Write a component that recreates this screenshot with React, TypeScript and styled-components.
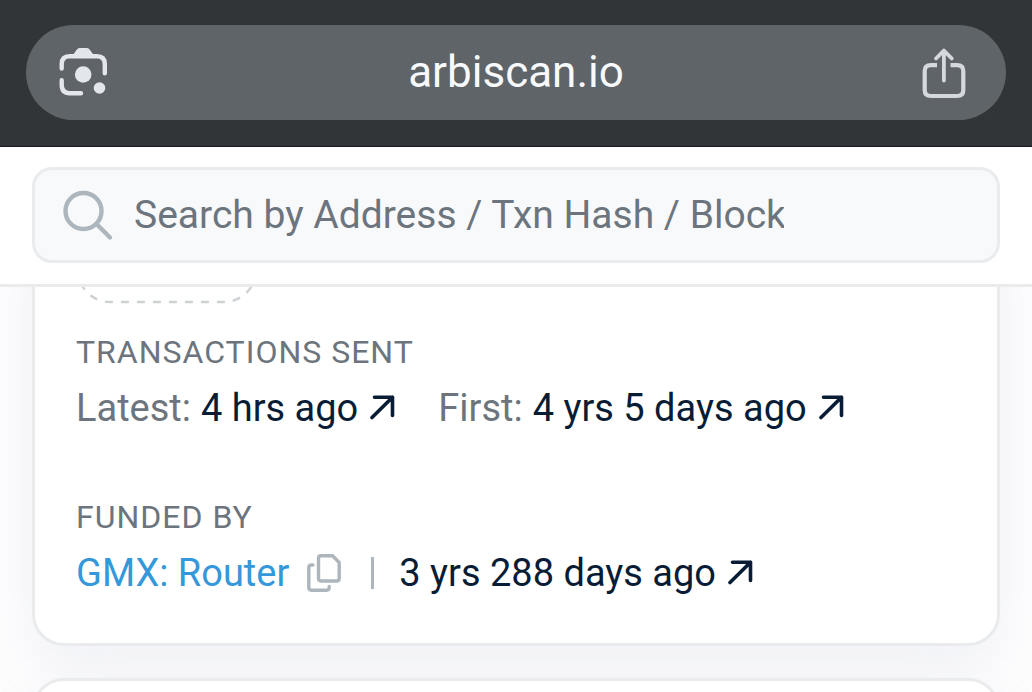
import React from "react";
import styled, { createGlobalStyle } from "styled-components";

const GlobalStyle = createGlobalStyle`
  *, *::before, *::after { box-sizing: border-box; }
  html, body { margin: 0; background: #fdfdfe; }
  body { font-family: Roboto, "Liberation Sans", sans-serif; overflow: hidden; }
  svg { display: block; flex: none; }
`;

const Page = styled.div`
  display: flex;
  flex-direction: column;
  height: 100vh;
`;

const BrowserBar = styled.div`
  background: #313538;
  border-bottom: 1px solid #1b1b1d;
  padding: 25px 26px 26px;
`;

const AddressPill = styled.div`
  display: grid;
  grid-template-columns: 1fr auto 1fr;
  align-items: center;
  height: 95px;
  padding: 0 40px 0 32px;
  border-radius: 48px;
  background: #5f6468;
  color: #f8f9fc;
`;

const IconButton = styled.button`
  display: flex;
  justify-self: ${(p) => (p.name === "share" ? "end" : "start")};
  padding: 0;
  border: 0;
  background: none;
  color: ${(p) => p.color ?? "#e3e6ea"};
`;

const Domain = styled.span`
  padding-left: 8px;
  font-size: 44px;
  line-height: 48px;
  padding-bottom: 2px;
`;

const SiteHeader = styled.header`
  background: #fff;
  border-bottom: 3px solid #e9ebed;
  padding: 20px 32px 21px;
`;

const SearchField = styled.label`
  display: flex;
  align-items: center;
  gap: 20px;
  height: 96px;
  padding: 0 213px 0 28px;
  border: 3px solid #e9ebed;
  border-radius: 20px;
  background: #f8f9fb;
  color: #adb5bd;
`;

const SearchInput = styled.input`
  flex: 1;
  min-width: 0;
  padding: 0;
  border: 0;
  outline: 0;
  background: none;
  font-family: inherit;
  font-size: 39px;
  line-height: 48px;
  height: 56px;
  color: #081d35;
  &::placeholder { color: #6c757d; opacity: 1; }
`;

const Content = styled.main`
  flex: 1;
  min-height: 0;
  overflow: hidden;
  padding: 0 32px;
`;

const Card = styled.section`
  border: 3px solid #e9ebed;
  border-radius: 32px;
  background: #fff;
  padding: 20px 41px 46px;
  margin-bottom: 32px;
  box-shadow: 0 20px 56px rgba(189, 197, 209, 0.2);
  &:first-child { margin-top: -82px; }
`;

const Group = styled.div`
  & + & { margin-top: 66px; }
`;

const Groups = styled.div`
  padding-top: 29px;
`;

const Heading = styled.h2`
  margin: 0 0 13px;
  font-size: 32px;
  font-weight: 400;
  line-height: 38px;
  letter-spacing: 1px;
  color: #6c757d;
`;

const Row = styled.div`
  display: flex;
  align-items: center;
  font-size: 38px;
  line-height: 48px;
  white-space: nowrap;
`;

const Pair = styled.span`
  display: flex;
  align-items: center;
  gap: 10px;
  margin-right: 42px;
  color: #6c757d;
`;

const TimeLink = styled.a`
  display: flex;
  align-items: center;
  gap: 12px;
  color: #081d35;
  text-decoration: none;
`;

const NameLink = styled.a`
  margin-right: 18px;
  color: #3498db;
  text-decoration: none;
`;

const Divider = styled.span`
  width: 3px;
  height: 32px;
  margin: 0 25px 0 30px;
  background: #adb5bd;
`;

const LensIcon = () => (
  <svg width="50" height="50" viewBox="0 0 50 50" fill="none" stroke="currentColor" strokeWidth="4.4" strokeLinecap="round">
    <path d="M3.7 20.5V16Q3.7 8.2 11.5 8.2H39Q46.8 8.2 46.8 16V25.3" />
    <path d="M3.7 32.2V36.5Q3.7 45.2 11.5 45.2H23" />
    <path d="M14.5 7.5L18.5 2Q19.8 0 21.5 0H29Q30.7 0 32 2L36 7.5Z" fill="currentColor" stroke="none" />
    <circle cx="25.2" cy="26.5" r="8.3" fill="currentColor" stroke="none" />
    <circle cx="41.5" cy="40" r="5.8" fill="currentColor" stroke="none" />
  </svg>
);

const ShareIcon = () => (
  <svg width="44" height="52" viewBox="0 0 44 52" fill="none" stroke="currentColor" strokeWidth="4.2" strokeLinecap="round">
    <path d="M15 18.2H9Q2.7 18.2 2.7 24V43Q2.7 49 9 49H35Q41.3 49 41.3 43V24Q41.3 18.2 35 18.2H28.5" strokeLinecap="butt" />
    <path d="M21.9 33.5V4M14 11.5L21.9 3.6L29.8 11.5" strokeWidth="3.8" strokeLinejoin="round" />
  </svg>
);

const SearchIcon = () => (
  <svg width="51" height="51" viewBox="0 0 51 51" fill="none" stroke="currentColor" strokeWidth="4.4" strokeLinecap="round">
    <circle cx="20.5" cy="21" r="18" />
    <path d="M33.5 34L47 47.5" />
  </svg>
);

const ArrowIcon = () => (
  <svg width="26" height="26" viewBox="0 0 26 26" fill="none" stroke="currentColor" strokeWidth="3.6" strokeLinecap="round" strokeLinejoin="round">
    <path d="M2 22.5L22.5 2.2M4.5 2.2H22.5V20.500" />
  </svg>
);

const CopyIcon = () => (
  <svg width="34" height="38" viewBox="0 0 34 38" fill="none" stroke="currentColor" strokeWidth="3.4" strokeLinejoin="round" strokeLinecap="round">
    <path d="M14 1.8H25.5L32.2 8.5V24.5Q32.2 27 29.7 27H14Q11.5 27 11.5 24.5V4.3Q11.5 1.8 14 1.8Z" />
    <path d="M6 11H4.5Q1.8 11 1.8 13.8V33.5Q1.8 36.2 4.5 36.2H19.5Q22.2 36.2 22.2 33.5V32.5" />
  </svg>
);

const DashedChip = () => (
  <svg width="182" height="76" viewBox="0 0 182 76" fill="none" aria-hidden="true">
    <rect x="2" y="2" width="178" height="72" rx="32" stroke="#cdd1d4" strokeWidth="2.4" strokeDasharray="8 8" strokeDashoffset="2.5" />
  </svg>
);

export default function App() {
  return (
    <Page>
      <GlobalStyle />
      <BrowserBar>
        <AddressPill>
          <IconButton type="button" aria-label="Search with camera"><LensIcon /></IconButton>
          <Domain>arbiscan.io</Domain>
          <IconButton type="button" name="share" aria-label="Share" color="#d5d8dc"><ShareIcon /></IconButton>
        </AddressPill>
      </BrowserBar>
      <SiteHeader>
        <SearchField>
          <SearchIcon />
          <SearchInput type="text" aria-label="Search" placeholder="Search by Address / Txn Hash / Block / Token" />
        </SearchField>
      </SiteHeader>
      <Content>
        <Card>
          <DashedChip />
          <Groups>
            <Group>
              <Heading>TRANSACTIONS SENT</Heading>
              <Row>
                <Pair>Latest: <TimeLink href="#latest">4 hrs ago <ArrowIcon /></TimeLink></Pair>
                <Pair>First: <TimeLink href="#first">4 yrs 5 days ago <ArrowIcon /></TimeLink></Pair>
              </Row>
            </Group>
            <Group>
              <Heading>FUNDED BY</Heading>
              <Row>
                <NameLink href="#router">GMX: Router</NameLink>
                <IconButton type="button" aria-label="Copy address" color="#adb5bd"><CopyIcon /></IconButton>
                <Divider />
                <TimeLink href="#funded">3 yrs 288 days ago <ArrowIcon /></TimeLink>
              </Row>
            </Group>
          </Groups>
        </Card>
        <Card />
      </Content>
    </Page>
  );
}
